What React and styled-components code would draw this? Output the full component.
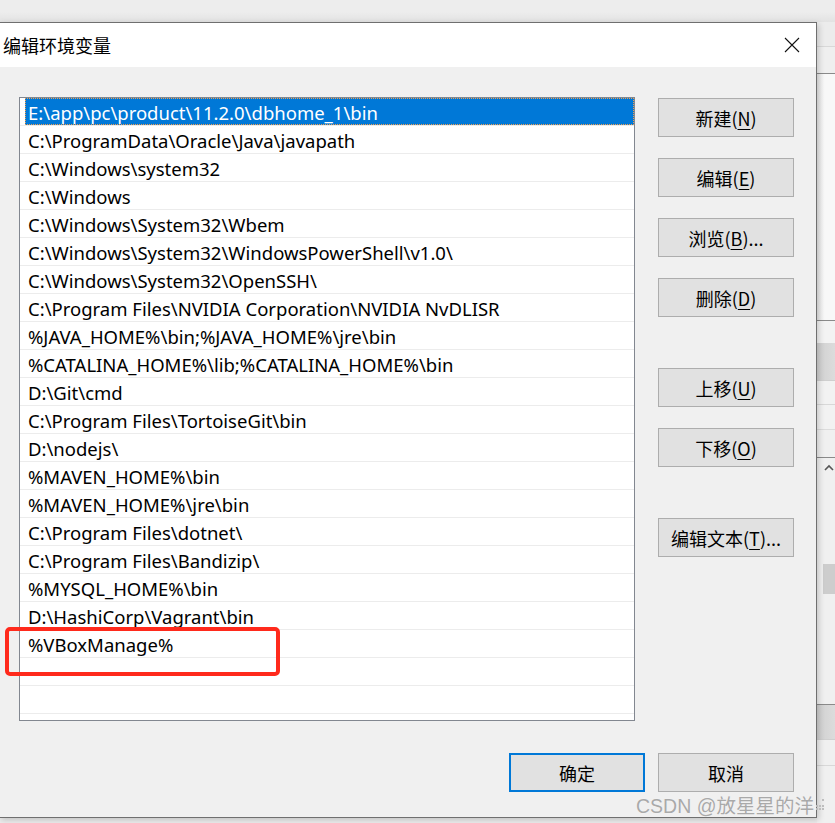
import React from 'react';
import styled, { createGlobalStyle } from 'styled-components';

const GlobalStyle = createGlobalStyle`
    html, body {
        margin: 0;
        padding: 0;
        background: #ececec;
    }
    * {
        box-sizing: border-box;
    }
`;

const UI_FONT = `"Noto Sans", "Noto Sans CJK SC", sans-serif`;

const Screen = styled.div`
    position: relative;
    width: 835px;
    height: 823px;
    overflow: hidden;
    display: flex;
    flex-direction: column;
    background: #ececec;
    font-family: ${UI_FONT};
`;

const TopStrip = styled.div`
    height: 22px;
    flex: 0 0 22px;
    background: linear-gradient(#ededed 0%, #ededed 55%, #e2e2e2 100%);
`;

const Desk = styled.div`
    flex: 1;
    display: flex;
    align-items: flex-start;
`;

const Dialog = styled.div`
    flex: 0 0 818px;
    width: 818px;
    height: 796px;
    margin-left: -1px;
    border: 1px solid #6f6f6f;
    background: #f0f0f0;
    display: flex;
    flex-direction: column;
    position: relative;
    z-index: 2;
    box-shadow: 2px 2px 6px rgba(0, 0, 0, 0.18);
`;

const TitleBar = styled.div`
    height: 44px;
    flex: 0 0 44px;
    background: #ffffff;
    display: flex;
    align-items: center;
    justify-content: space-between;
    padding: 0 16px 0 3px;
`;

const Title = styled.span`
    font-family: "Noto Sans CJK SC", sans-serif;
    font-size: 18px;
    color: #000;
    line-height: 1;
`;

const CloseButton = styled.div`
    width: 16px;
    height: 16px;
    display: flex;
    align-items: center;
    justify-content: center;
`;

const Body = styled.div`
    flex: 1;
    display: flex;
    flex-direction: column;
    padding: 30px 22px 0 19px;
`;

const MainRow = styled.div`
    display: flex;
    gap: 23px;
`;

const ListBox = styled.div`
    width: 616px;
    height: 624px;
    border: 1px solid #828790;
    background: #fff;
    overflow: hidden;
    display: flex;
    flex-direction: column;
`;

const Row = styled.div`
    flex: 0 0 28px;
    height: 28px;
    display: flex;
    align-items: stretch;
    padding: 0 0 0 1px;
    border-bottom: 1px solid #ececec;
`;

const Cell = styled.div`
    flex: 1;
    display: flex;
    align-items: center;
    margin-left: 4px;
    padding-left: 3px;
    padding-top: 1px;
    font-size: 18.5px;
    white-space: nowrap;
    color: ${p => (p.$selected ? '#fff' : '#000')};
    background: ${p => (p.$selected ? '#0078d7' : 'transparent')};
    outline: ${p => (p.$selected ? '1px dotted #f0a050' : 'none')};
    outline-offset: -1px;
`;

const SideColumn = styled.div`
    display: flex;
    flex-direction: column;
    gap: 51px;
    padding-top: 1px;
`;

const ButtonGroup = styled.div`
    display: flex;
    flex-direction: column;
    gap: 21px;
`;

const Button = styled.div`
    width: 136px;
    height: 39px;
    display: flex;
    align-items: center;
    justify-content: center;
    background: #e1e1e1;
    border: ${p => (p.$default ? '2px solid #0078d7' : '1px solid #adadad')};
    font-family: "Noto Sans CJK SC", sans-serif;
    font-size: 18px;
    color: #000;
    white-space: nowrap;
    u {
        text-decoration: underline;
        text-underline-offset: 3px;
        text-decoration-thickness: 1px;
    }
`;

const Footer = styled.div`
    display: flex;
    justify-content: flex-end;
    gap: 13px;
    margin-top: 32px;
`;

const Highlight = styled.div`
    position: absolute;
    left: 5px;
    top: 627px;
    width: 275px;
    height: 49px;
    border: 4px solid #ff2a1c;
    border-radius: 5px;
    z-index: 5;
`;

const Watermark = styled.div`
    position: absolute;
    left: 636px;
    top: 790px;
    display: flex;
    align-items: center;
    gap: 2px;
    font-family: "Liberation Sans", "Noto Sans CJK SC", sans-serif;
    font-size: 19.5px;
    color: #a9a9a9;
    text-shadow: 0 0 1px rgba(255, 255, 255, 0.8);
    z-index: 6;
    white-space: nowrap;
`;

const BackWindow = styled.div`
    flex: 1;
    display: flex;
    flex-direction: column;
    align-self: stretch;
`;

const Band = styled.div`
    flex: 0 0 ${p => p.$h}px;
    height: ${p => p.$h}px;
    background: ${p => p.$bg};
    border-bottom: ${p => (p.$line ? `1px solid ${p.$line}` : 'none')};
    position: relative;
`;

const ScrollTrack = styled.div`
    flex: 0 0 247px;
    background: #f0f0f0;
    display: flex;
    flex-direction: column;
    align-items: center;
    padding: 6px 0 0 6px;
    border-bottom: 1px solid #8a8a8a;
`;

const Thumb = styled.div`
    width: 12px;
    height: 30px;
    margin-top: 92px;
    background: #cdcdcd;
`;

const ITEMS = [
    'E:\\app\\pc\\product\\11.2.0\\dbhome_1\\bin',
    'C:\\ProgramData\\Oracle\\Java\\javapath',
    'C:\\Windows\\system32',
    'C:\\Windows',
    'C:\\Windows\\System32\\Wbem',
    'C:\\Windows\\System32\\WindowsPowerShell\\v1.0\\',
    'C:\\Windows\\System32\\OpenSSH\\',
    'C:\\Program Files\\NVIDIA Corporation\\NVIDIA NvDLISR',
    '%JAVA_HOME%\\bin;%JAVA_HOME%\\jre\\bin',
    '%CATALINA_HOME%\\lib;%CATALINA_HOME%\\bin',
    'D:\\Git\\cmd',
    'C:\\Program Files\\TortoiseGit\\bin',
    'D:\\nodejs\\',
    '%MAVEN_HOME%\\bin',
    '%MAVEN_HOME%\\jre\\bin',
    'C:\\Program Files\\dotnet\\',
    'C:\\Program Files\\Bandizip\\',
    '%MYSQL_HOME%\\bin',
    'D:\\HashiCorp\\Vagrant\\bin',
    '%VBoxManage%',
    '',
    '',
    '',
];

const SIDE_GROUPS = [
    [
        ['新建(', 'N', ')'],
        ['编辑(', 'E', ')'],
        ['浏览(', 'B', ')...'],
        ['删除(', 'D', ')'],
    ],
    [
        ['上移(', 'U', ')'],
        ['下移(', 'O', ')'],
    ],
    [['编辑文本(', 'T', ')...']],
];

function Label({ parts }) {
    return (
        <span>
            {parts[0]}
            <u>{parts[1]}</u>
            {parts[2]}
        </span>
    );
}

function App() {
    return (
        <Screen>
            <GlobalStyle />
            <TopStrip />
            <Desk>
                <Dialog>
                    <TitleBar>
                        <Title>编辑环境变量</Title>
                        <CloseButton>
                            <svg width="16" height="16" viewBox="0 0 16 16">
                                <path d="M1 1 L15 15 M15 1 L1 15" stroke="#111" strokeWidth="1.1" fill="none" />
                            </svg>
                        </CloseButton>
                    </TitleBar>
                    <Body>
                        <MainRow>
                            <ListBox>
                                {ITEMS.map((text, i) => (
                                    <Row key={i}>
                                        <Cell $selected={i === 0}>{text}</Cell>
                                    </Row>
                                ))}
                            </ListBox>
                            <SideColumn>
                                {SIDE_GROUPS.map((group, g) => (
                                    <ButtonGroup key={g}>
                                        {group.map((parts, i) => (
                                            <Button key={i}>
                                                <Label parts={parts} />
                                            </Button>
                                        ))}
                                    </ButtonGroup>
                                ))}
                            </SideColumn>
                        </MainRow>
                        <Footer>
                            <Button $default>确定</Button>
                            <Button>取消</Button>
                        </Footer>
                    </Body>
                </Dialog>
                <BackWindow>
                    <Band $h={25} $bg="#ececec" $line="#d8d8d8" />
                    <Band $h={27} $bg="#efefef" $line="#8a8a8a" />
                    <Band $h={247} $bg="linear-gradient(90deg,#e6e6e6,#f8f8f8 40%)" $line="#8a8a8a" />
                    <Band $h={22} $bg="#f3f3f3" />
                    <Band $h={38} $bg="linear-gradient(90deg,#d0d0d0,#dcdcdc)" $line="#cfcfcf" />
                    <Band $h={24} $bg="#f2f2f2" $line="#d8d8d8" />
                    <Band $h={25} $bg="#f2f2f2" $line="#dcdcdc" />
                    <Band $h={28} $bg="#f0f0f0" $line="#8a8a8a" />
                    <ScrollTrack>
                        <svg width="10" height="8" viewBox="0 0 10 8">
                            <path d="M1 6 L5 2 L9 6" stroke="#555" strokeWidth="1.6" fill="none" />
                        </svg>
                        <Thumb />
                    </ScrollTrack>
                    <Band $h={35} $bg="linear-gradient(90deg,#d0d0d0,#dcdcdc)" $line="#cfcfcf" />
                    <Band $h={26} $bg="#f0f0f0" $line="#d8d8d8" />
                    <Band $h={60} $bg="#f0f0f0" />
                </BackWindow>
            </Desk>
            <Highlight />
            <Watermark>
                <span>CSDN @放星星的洋</span>
                <svg width="10" height="12" viewBox="0 0 10 12">
                    <g fill="#bdbdbd">
                        <rect x="6" y="0" width="2" height="2" />
                        <rect x="0" y="6" width="2" height="2" />
                        <rect x="3" y="6" width="2" height="2" />
                        <rect x="6" y="6" width="2" height="2" />
                        <rect x="0" y="9" width="2" height="2" />
                        <rect x="3" y="9" width="2" height="2" />
                        <rect x="6" y="9" width="2" height="2" />
                    </g>
                </svg>
            </Watermark>
        </Screen>
    );
}

export default App;
